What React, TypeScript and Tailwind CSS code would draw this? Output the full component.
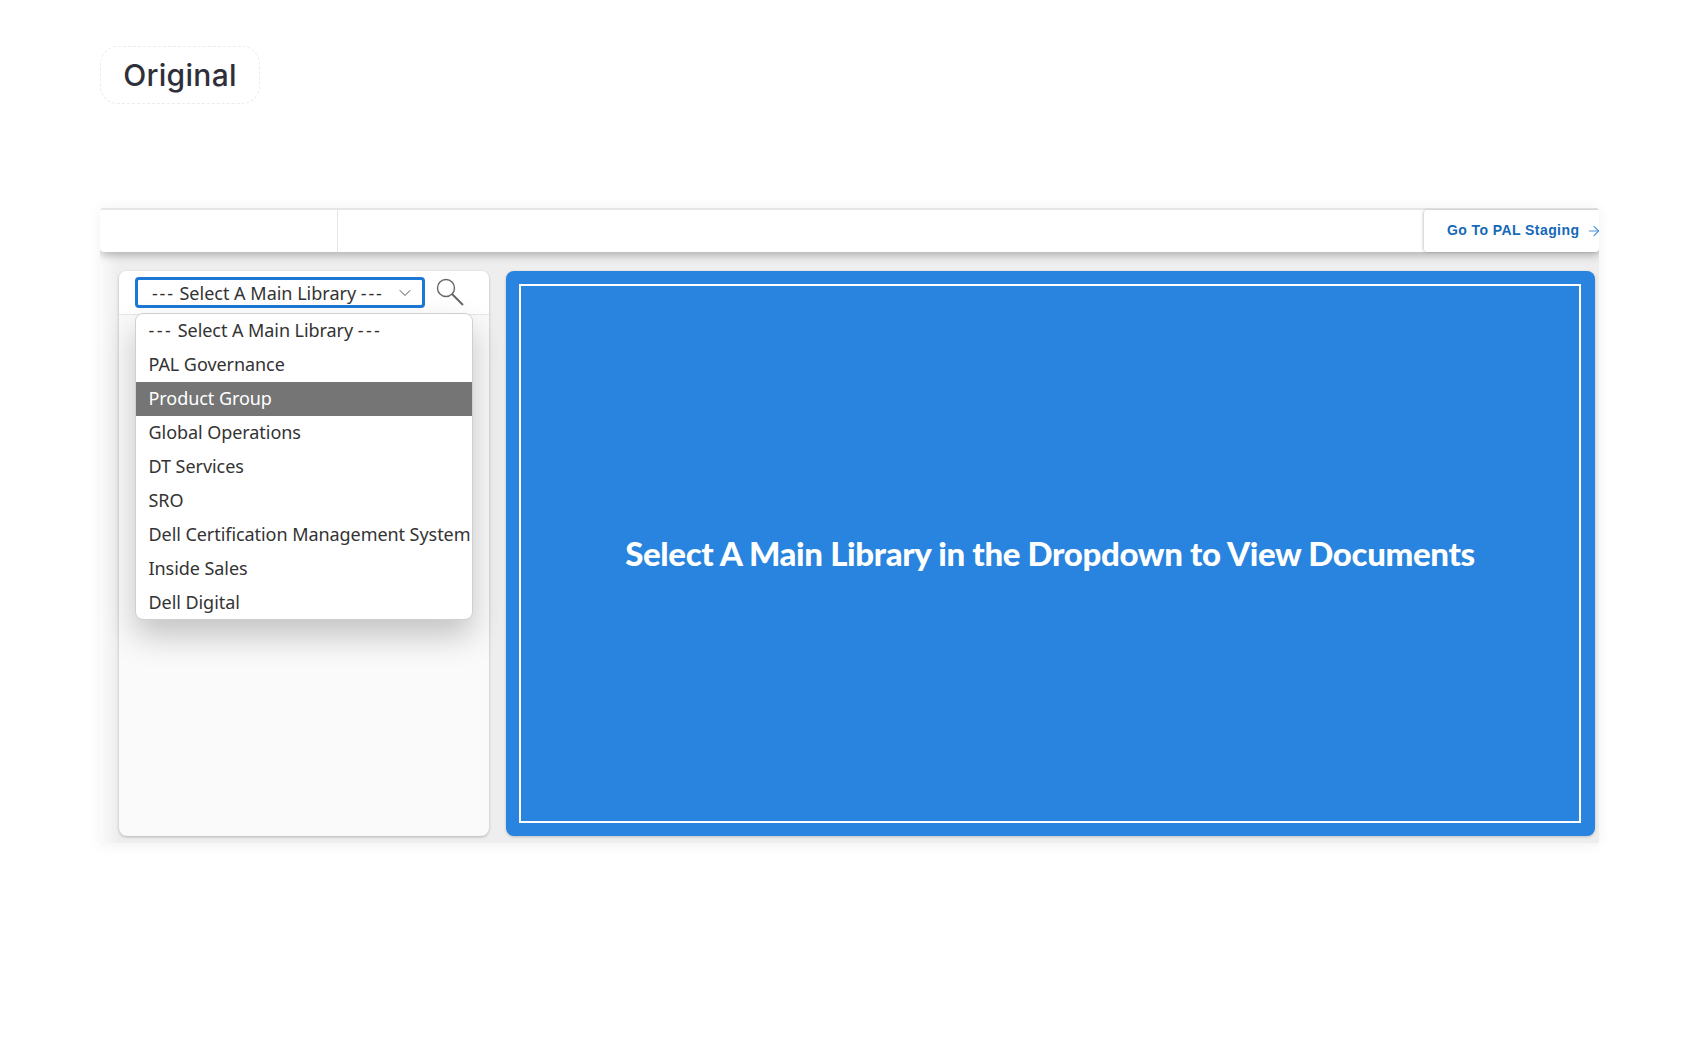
import React from "react";
import { ChevronDown, ArrowRight } from "lucide-react";

const libraries = [
  "Select A Main Library",
  "PAL Governance",
  "Product Group",
  "Global Operations",
  "DT Services",
  "SRO",
  "Dell Certification Management System",
  "Inside Sales",
  "Dell Digital",
];

export default function App() {
  return (
    <div className="w-[1700px] h-[1046px] bg-white pl-[100px] pt-[46px] overflow-hidden">
      {/* Label pill */}
      <div className="w-[160px] h-[58px] rounded-[18px] border border-dashed border-[#ececec] flex items-center justify-center font-['Inter',sans-serif] font-medium tracking-[0.3px] text-[30px] text-[#2f2f3a]">
        Original
      </div>

      {/* Screenshot frame */}
      <div className="mt-[104px] w-[1499px] h-[637px] bg-[linear-gradient(to_right,#fbfbfb,#eeeeee_18px)] rounded-[4px] shadow-[0_0_14px_rgba(0,0,0,0.06)] flex flex-col overflow-hidden border-b-2 border-[#f7f7f7]">
        <div className="h-[44px] shrink-0 bg-white flex shadow-[0_3px_10px_rgba(0,0,0,0.28)] border-t-2 border-[#e6e6e6] rounded-b-[4px] relative">
          <div className="w-[238px] border-r border-[#e5e5e5]" />
          <div className="flex-1" />
          <div className="w-[176px] border-l border-[#dcdcdc] rounded-l-[4px] shadow-[0_0_3px_rgba(0,0,0,0.2)] flex items-center pl-[23px] pb-[1px] gap-[7px] font-['Liberation_Sans',sans-serif] font-bold tracking-[0.42px] text-[14px] text-[#1569b8] whitespace-nowrap overflow-hidden">
            Go To PAL Staging
            <ArrowRight size={16} strokeWidth={1.6} className="text-[#4a90d9] shrink-0" />
          </div>
        </div>

        <div className="flex-1 flex gap-[17px] pl-[19px] pr-[4px] pt-[19px] pb-[7px]">
          {/* Left panel */}
          <div className="w-[370px] bg-[#fafafa] rounded-[8px] shadow-[0_1px_3px_rgba(0,0,0,0.25)] relative">
            <div className="h-[43px] bg-white rounded-t-[8px] flex items-start pt-[6px] pl-[16px] shadow-[0_1px_1px_rgba(0,0,0,0.08)]">
              <div className="w-[290px] h-[31px] border-[3px] border-[#1b78d6] rounded-[4px] bg-white flex items-center pl-[14px] pr-[7px] justify-between font-['Noto_Sans',sans-serif] text-[18px] text-[#333] whitespace-nowrap">
                <span className="pt-[2px]">
                  <span className="tracking-[1.8px]">---</span> Select A Main Library <span className="tracking-[1.8px]">---</span>
                </span>
                <ChevronDown size={20} strokeWidth={1.1} className="text-[#444]" />
              </div>
              <svg width="30" height="30" viewBox="0 0 30 30" fill="none" className="ml-[10px]">
                <circle cx="11" cy="11" r="8.5" stroke="#666" strokeWidth="1.4" />
                <path d="M17 17L28 28" stroke="#666" strokeWidth="2" />
              </svg>
            </div>

            {/* Open dropdown */}
            <div className="absolute left-[16px] top-[42px] w-[338px] bg-white rounded-[8px] overflow-hidden border border-[#cfcfcf] shadow-[0_16px_32px_rgba(0,0,0,0.22)] font-['Noto_Sans',sans-serif] text-[18px] text-[#333]">
              {libraries.map((name, i) => (
                <div
                  key={name}
                  className={`h-[33.9px] pl-[12.5px] flex items-center whitespace-nowrap tracking-[-0.06px] ${
                    name === "Product Group" ? "bg-[#757575] text-white" : ""
                  }`}
                >
                  {i === 0 ? (
                    <span>
                      <span className="tracking-[2.4px]">---</span> Select A Main Library <span className="tracking-[2.4px]">---</span>
                    </span>
                  ) : (
                    name
                  )}
                </div>
              ))}
            </div>
          </div>

          {/* Main panel */}
          <div className="flex-1 bg-[#2884de] rounded-[8px] pl-[13px] pr-[14px] py-[13px] shadow-[0_1px_3px_rgba(0,0,0,0.2)]">
            <div className="h-full border-2 border-white flex items-center justify-center font-['Lato',sans-serif] font-black text-[33px] tracking-[-0.35px] text-white">
              Select A Main Library in the Dropdown to View Documents
            </div>
          </div>
        </div>
      </div>
    </div>
  );
}
